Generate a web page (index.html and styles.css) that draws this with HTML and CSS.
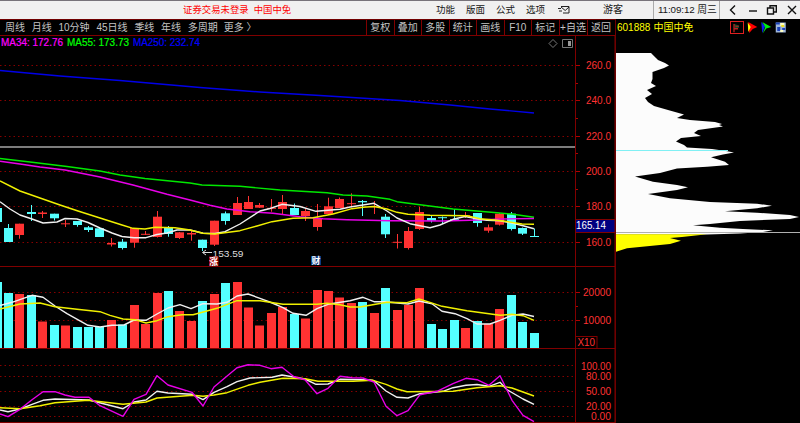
FILE: index.html
```html
<!DOCTYPE html>
<html lang="zh-CN">
<head>
<meta charset="utf-8">
<title>601888 中国中免</title>
<link rel="stylesheet" href="styles.css">
</head>
<body>
<div class="app">
  <header class="titlebar">
    <div class="title"><span>证券交易未登录</span><span>中国中免</span></div>
    <nav class="menu">
      <span>功能</span><span>版面</span><span>公式</span><span>选项</span>
    </nav>
    <svg class="mail" viewBox="0 0 13 10"><path d="M3 1.5h8v6.500H5M3 2l4.200 3.500L11 2M0 3.500h3M1 6h3" /></svg>
    <div class="guest">游客</div>
    <div class="clock">11:09:12 周三</div>
    <div class="controls">
      <svg viewBox="0 0 12 12"><path d="M8 1.5L3.500 6 8 10.500"/></svg>
      <svg viewBox="0 0 12 12"><path d="M2 7h8"/></svg>
      <svg viewBox="0 0 12 12"><path d="M1.500 4h6v6h-6zM4 4V1.700h6.300V8H8"/></svg>
      <svg viewBox="0 0 12 12"><path d="M2 2l8 8M10 2l-8 8"/></svg>
    </div>
  </header>

  <main class="body">
    <section class="left">
      <div class="toolbar">
        <div class="periods">
          <span>周线</span><span>月线</span><span class="wide">10分钟</span><span class="wide">45日线</span><span>季线</span><span>年线</span><span class="three">多周期</span><span>更多 〉</span>
        </div>
        <div class="tools">
          <span>复权</span><span>叠加</span><span>多股</span><span>统计</span><span>画线</span><span>F10</span><span>标记</span><span>+自选</span><span>返回</span>
        </div>
      </div>

      <svg class="panel price" viewBox="0 36 615 231">
        <path class="grid" d="M0 65.500H575M0 100.500H575M0 136.500H575M0 171.500H575M0 206.500H575M0 242.500H575"/>
        <path class="level" d="M0 147H575"/>
        <g class="frame">
          <path d="M575.500 36V266M615 36V266M0 266.500H615"/>
          <path class="tick" d="M576 65.500h4M576 100.500h4M576 136.500h4M576 171.500h4M576 206.500h4M576 242.500h4M576 83.500h2M576 118.500h2M576 153.500h2M576 189.500h2"/>
        </g>
        <g id="candles"></g>
        <g class="lines">
          <polyline class="blue" points="0,70.500 60,76 120,80.500 200,87.500 260,92 320,95.500 400,100.500 450,105 490,109 534,113"/>
          <polyline class="green" points="0,158.500 30,162 67,166.500 100,171 120,175 145,178.500 190,183 202,185 240,186.300 280,190 327,192.700 343,195 367,196 390,199.300 397,201.700 420,204.700 453,209 497,212.700 513,214.300 534,217.300"/>
          <polyline class="magenta" points="0,161.300 20,164 40,167 65,170 85,174 100,177 133,185 167,194.300 190,200 210,205.300 227,209 250,211.700 273,213.300 300,216.700 323,218.700 347,219.700 390,220.700 443,221 470,220.300 503,219 534,218.500"/>
          <polyline class="white" points="0,201.700 10,209 20,215 32,219 43,223 57,222 65,218.500 77,219 88,222.500 100,228 112,233 122,236.500 134,237.700 146,237.700 157,234.500 167,233 177,230 190,230 203,233.300 215,233.500 225,231.700 240,224 260,211 270,208.500 282,204.300 300,206.500 316,211.300 340,209.300 350,207 374,203.300 387,211 397,218 410,223.700 430,227.700 440,225 453,219.300 465,216.500 477,218.700 487,220.300 500,220.700 513,223.300 523,225.700 534,228.700"/>
          <polyline class="yellow" points="0,181 20,191 40,198 60,205 78,211 100,218 122,225 133,228.300 145,229 155,227.300 175,227.700 190,230 203,233.300 215,234 240,230.700 257,226 272,221.700 293,218.300 313,217.700 333,214 352,208.700 363,207.300 374,206.500 387,209 397,212.300 408,214.300 430,215.300 467,215.700 480,218.700 497,220.300 507,221.500 522,224 534,224.300"/>
        </g>
        <g class="legend">
          <text class="m" x="1" y="46" textLength="62" lengthAdjust="spacingAndGlyphs">MA34: 172.76</text>
          <text class="g" x="67" y="46" textLength="62" lengthAdjust="spacingAndGlyphs">MA55: 173.73</text>
          <text class="b" x="133" y="46" textLength="67" lengthAdjust="spacingAndGlyphs">MA250: 232.74</text>
        </g>
        <path class="glyph" d="M553 39.500l4 4-4 4-4-4zM562.500 39.500h10v8h-10z"/>
        <path class="glyph-fill" d="M568 41h3v5h-3z"/>
        <g class="axis">
          <text x="586" y="69" textLength="25" lengthAdjust="spacingAndGlyphs">260.0</text>
          <text x="586" y="104" textLength="25" lengthAdjust="spacingAndGlyphs">240.0</text>
          <text x="586" y="140" textLength="25" lengthAdjust="spacingAndGlyphs">220.0</text>
          <text x="586" y="175" textLength="25" lengthAdjust="spacingAndGlyphs">200.0</text>
          <text x="586" y="210" textLength="25" lengthAdjust="spacingAndGlyphs">180.0</text>
          <text x="586" y="246" textLength="25" lengthAdjust="spacingAndGlyphs">160.0</text>
        </g>
        <rect class="last" x="575.500" y="219.500" width="39.500" height="13"/>
        <text class="last-text" x="576" y="229" textLength="30" lengthAdjust="spacingAndGlyphs">165.14</text>
        <path class="arrow" d="M212 252.500h-9M206 250l-3.500 2.500 3.500 2.500"/>
        <text class="low" x="212.500" y="256.500" textLength="31" lengthAdjust="spacingAndGlyphs">153.59</text>
        <rect class="tag-red" x="209" y="256.500" width="9.500" height="9"/>
        <text class="tag" x="209.300" y="264.600">涨</text>
        <rect class="tag-blue" x="311" y="256" width="10" height="9"/>
        <text class="tag" x="311.500" y="264.300">财</text>
      </svg>

      <svg class="panel volume" viewBox="0 267 615 82">
        <path class="grid" d="M0 292.500H575M0 320.500H575"/>
        <g class="frame">
          <path d="M575.500 267V349M615 267V349M0 348.500H615"/>
          <path class="tick" d="M576 292.500h4M576 320.500h4M576 306.500h2"/>
        </g>
        <g id="bars"></g>
        <g class="lines">
          <polyline class="white" points="0,305.500 12,302.300 32,295.300 43,297.300 55,306 67,313.700 88,325.300 100,327 112,325.300 124,325 134,320 146,320.300 157,314 168,308 180,304.700 191,308.700 203,303.700 217,304 227,302.300 237,296 248,294 260,298.300 271,302.500 283,307.700 293,313.300 306,315.300 317,308.700 328,304.300 350,300.700 363,297.300 374,301.700 385,301.700 408,304 419,301 432,303.700 442,311.300 455,313.700 467,318.700 477,324 490,324 500,320.300 512,315.300 523,314 534,316.500"/>
          <polyline class="yellow" points="0,309 20,304 40,303 55,306.700 77,309.300 100,311.700 110,315.300 123,319 135,319.700 146,323 157,320.700 168,316.700 182,314.700 193,314.700 217,308.300 237,300.700 260,300.700 283,304.300 317,304.300 327,303.300 340,304.700 350,307 360,307 387,302.300 407,302.700 419,299 430,302.300 442,306.300 467,310.700 500,315.300 512,314.300 523,315.700 534,320.300"/>
        </g>
        <g class="axis">
          <text x="583" y="296" textLength="28" lengthAdjust="spacingAndGlyphs">20000</text>
          <text x="583" y="324" textLength="28" lengthAdjust="spacingAndGlyphs">10000</text>
          <rect class="unit" x="575.500" y="336.500" width="21.500" height="12"/>
          <text x="577.500" y="346" textLength="17.500" lengthAdjust="spacingAndGlyphs">X10</text>
        </g>
      </svg>

      <svg class="panel indicator" viewBox="0 349 615 74">
        <path class="grid" d="M0 365.500H575M0 376.500H575M0 391.500H575M0 406.500H575M0 416.500H575"/>
        <g class="frame">
          <path d="M575.500 349V422M615 349V422M0 422.500H615"/>
        </g>
        <g class="lines">
          <polyline class="white" points="0,410 8,411.700 20,409 32,404.300 43,400.300 55,399 89,400 123,408.700 134,402 146,400 157,391.300 168,393 192,394.300 203,399.700 214,392.300 227,386.700 237,381.700 250,378 272,377.300 282,375 305,379 316,384.300 328,384 340,379.300 370,380 374,380.700 386,391 397,397.300 408,398 420,393.700 443,391.300 453,387.700 466,385.300 477,384.500 489,386.300 500,382.300 507,389.700 523,399 534,404.300"/>
          <polyline class="yellow" points="0,407.700 20,408.700 40,405.700 55,402.700 88,400.300 123,404.300 146,402 157,398 193,395.300 203,396.300 214,395 227,392.700 248,385.300 260,382.300 283,378.300 305,378.700 318,381.300 353,381.300 373,380.300 386,384.300 397,389 407,391.700 453,391.300 477,387.700 500,385.700 512,388 534,396"/>
          <polyline class="magenta" points="0,414 8,416.700 20,409.300 32,399.700 43,391.700 55,391.700 65,395 75,397.300 89,397.300 100,405.700 123,416.300 134,399.300 146,394.300 157,375.700 168,385 192,392.300 203,406 214,387 237,367.700 248,364.700 260,365.300 271,368.700 282,367.300 294,376.700 305,379.700 317,393.700 328,388.300 340,376.300 352,377.700 363,378 374,382 386,406.300 397,415.700 408,410.700 420,394.700 437,391.300 453,383.700 466,378.300 477,379.700 489,385.300 500,375.700 512,400.300 523,415.300 534,421.700"/>
        </g>
        <g class="axis">
          <text x="581" y="370" textLength="30" lengthAdjust="spacingAndGlyphs">100.00</text>
          <text x="586" y="380" textLength="25" lengthAdjust="spacingAndGlyphs">80.00</text>
          <text x="586" y="395" textLength="25" lengthAdjust="spacingAndGlyphs">50.00</text>
          <text x="586" y="410" textLength="25" lengthAdjust="spacingAndGlyphs">20.00</text>
          <text x="591" y="420" textLength="20" lengthAdjust="spacingAndGlyphs">0.00</text>
        </g>
      </svg>
    </section>

    <aside class="right">
      <div class="stock">
        <span class="code">601888</span><span class="name">中国中免</span>
        <div class="flags">
          <svg class="active" viewBox="0 0 13 13"><path fill="#164a28" d="M3 2l6 2v3H4z"/><path fill="#c02020" d="M2.500 2.500h1.500V12H2.500zM5 4.500h4v1H5zM4 7h4v2H4z"/></svg>
          <svg viewBox="0 0 13 13"><path fill="#f00" d="M3 1l9 5-4.500 2L4 12z"/><path fill="#ff0" d="M2.500 1.500l3 4.500-2.500 5z"/></svg>
          <svg viewBox="0 0 13 13"><path fill="#0c1ef0" d="M2 1l4 4-3 7z"/><path fill="#0e1" d="M3 1l9 5-5 1.500-3.500 5L6 6z"/></svg>
          <svg viewBox="0 0 13 13"><path fill="#9fb6dc" d="M1.500 1.500h10v10h-10z"/><path fill="#1940b8" d="M1.500 1.500h4v2h-4zM3 6h3v4H3zM8 7h3v2H8z"/><path fill="#ffffc0" d="M6 2h4v3H6zM6 9h3v2H6z"/><path fill="#eee020" d="M7 4h3v2H7z"/></svg>
        </div>
      </div>
      <svg class="profile" viewBox="615 36 185 387">
        <path class="white-area" d="M616 53H651L656 58 658 60 665 63 669 65.500 664 68 652.500 72 652.500 79 651 83 656 86 647 90 652 94 645 98 648 102 654 106 668 110 684 114.500 677 118 690 120 715 122 722 124 719 125 723 126.500 698 130 694 133 701 136 681 138 676 141.500 684 145 687 147.500 712 149 726 151 734 152.500 723 154.500 711 157.300 725 161.700 729 165 707 166.700 677 168.500 660 173 635 176.500 653 181.700 677 185 688 187.300 677 190 648 194 670 198.300 710 202 757 203.700 772 205.700 757 208.300 725 211.300 757 212.700 790 215 799 217 790 219 740 221 710 224 693 225.300 720 227.700 743 229 773 230.300 763 232 740 233.500 707 234.500H616z"/>
        <path class="yellow-area" d="M616 234.200H707L682 237 670 238 681 240.700 670 244 627 248.300 616 251.700z"/>
        <path class="cyan-line" d="M616 150.500H728"/>
        <path class="gray-line" d="M616 232.500H800"/>
      </svg>
    </aside>
  </main>
</div>
<script src="chart.js"></script>
</body>
</html>
```
FILE: styles.css
```css
* { box-sizing: border-box; }
body {
  margin: 0;
  background: #000;
  font-family: "Liberation Sans", "Noto Sans CJK SC", sans-serif;
  font-size: 10px;
}
.app { width: 800px; height: 423px; overflow: hidden; display: flex; flex-direction: column; }

.titlebar {
  height: 19px;
  flex: none;
  display: flex;
  align-items: center;
  background: #f0f0f0;
  border-top: 1px solid #77737a;
  color: #151515;
  line-height: 18px;
  white-space: nowrap;
}
.title { display: flex; gap: 5px; padding-left: 183px; width: 436px; color: #f00; font-size: 9.4px; }
.menu { display: flex; width: 122px; }
.menu span { width: 30px; font-size: 9.5px; }
.mail { width: 13px; height: 10px; fill: none; stroke: #222; stroke-width: 1; }
.guest { width: 83px; padding-left: 32px; height: 18px; border-right: 1px solid #aaa; }
.clock { width: 66px; padding-left: 4px; height: 18px; border-right: 1px solid #aaa; font-size: 9.8px; letter-spacing: -0.1px; }
.controls { display: flex; gap: 7.5px; padding-left: 7px; }
.controls svg { width: 12px; height: 12px; fill: none; stroke: #111; stroke-width: 1.4; }

.body { display: flex; flex: 1; }
.left { width: 615px; display: flex; flex-direction: column; }
.toolbar {
  height: 17px;
  display: flex;
  justify-content: space-between;
  border-top: 1px solid #700000;
  border-bottom: 1px solid #800000;
  color: #c4c4c4;
  line-height: 15px;
  white-space: nowrap;
}
.periods { display: flex; padding-left: 5px; }
.periods span { width: 26.7px; }
.periods .wide { width: 38px; }
.periods .three { width: 36px; }
.tools { display: grid; grid-template-columns: repeat(7, 27.5px) 28px 28px; width: 249px; }
.tools span { border-left: 1px solid #800000; text-align: center; }

.panel { display: block; width: 615px; }
.price { height: 231px; }
.volume { height: 82px; }
.indicator { height: 74px; }

.grid { fill: none; stroke: #870000; stroke-width: 1; stroke-dasharray: 1.5 3; }
.frame path { fill: none; stroke: #800000; stroke-width: 1; }
.frame .tick { stroke: #b00000; }
.level { stroke: #a6a6a6; stroke-width: 1.6; }
.lines polyline { fill: none; stroke-width: 1.4; stroke-linejoin: round; }
.lines .blue { stroke: #0000e8; }
.lines .green { stroke: #00e800; }
.lines .magenta { stroke: #e800e8; }
.lines .white { stroke: #f0f0f0; }
.lines .yellow { stroke: #f0f000; }

.up { fill: #ff3232; }
.down { fill: #54ffff; }

.legend text { font-size: 10px; stroke-width: 0.2; }
.legend .m { fill: #f0f; stroke: #f0f; }
.legend .g { fill: #0f0; stroke: #0f0; }
.legend .b { fill: #00f; stroke: #00f; }
.axis text { font-size: 10.8px; fill: #ff3232; }
.unit { fill: #000; stroke: #800000; }
.glyph { fill: none; stroke: #777; stroke-width: 1; }
.glyph-fill { fill: #999; }
.last { fill: #000080; stroke: #800000; }
.last-text { font-size: 10.5px; fill: #fff; }
.arrow { fill: none; stroke: #ddd; stroke-width: 1; }
.low { font-size: 9.8px; fill: #ddd; }
.tag { font-size: 8.8px; font-weight: bold; fill: #fff; }
.tag-red { fill: #a00000; }
.tag-blue { fill: #0a3c82; }

.right { width: 185px; display: flex; flex-direction: column; border-left: 1px solid #700000; }
.stock { height: 17px; display: flex; align-items: center; padding-left: 1px; color: #ff0; white-space: nowrap; line-height: 15px; }
.code { width: 36.5px; font-size: 10px; }
.name { width: 76.5px; }
.flags { display: flex; gap: 1px; }
.flags svg { width: 13.5px; height: 13px; }
.flags .active { border: 1px solid #e02020; }
.profile { display: block; width: 185px; height: 387px; margin-left: -1px; }
.white-area { fill: #fcfcfc; }
.yellow-area { fill: #ff0; }
.cyan-line { stroke: #80f0f4; }
.gray-line { stroke: #b0b0b0; }
```
FILE: chart.js
```js
const PITCH = 11.43;
const FIRST = 8.6;
const NS = "http://www.w3.org/2000/svg";

// direction, body top, body bottom, high, low
const candles = [
  ["d",208,222,208,222],["d",228,242,224,242],["u",223.7,235,223.7,238.7],["d",212,214,205,221],
  ["u",212.5,214,211,218],["d",213.7,218.3,213.7,220.5],["u",223.3,224.3,220,227],["d",221,225,221,226.7],
  ["d",227.3,230,226,232],["d",228.3,237,228,237],["u",243,244.5,238,246.5],["d",241.7,248,239,249.5],
  ["u",228,242.7,228,247.7],["u",233.8,234.8,231,235],["u",216.7,237,211,237.5],["d",227,234,226,236.7],
  ["u",232.3,238,232,239],["u",233,234.5,231,240.7],["d",239.7,248,239.7,251],["u",220.7,244.7,220.7,246],
  ["d",213.3,221,211.5,224.7],["u",203,215,197,215],["u",202,209,196,209],["u",205,207.7,203,208],
  ["u",207.8,208.8,199,211.7],["u",202,209,195,214.3],["d",208,215,203.5,215],["u",211,216,209,221],
  ["u",218.3,227,204,230.7],["u",206.3,214,197.7,215],["u",199,208,197.5,208],["u",203.2,204.2,193.3,207.3],
  ["d",201,202.3,200,216],["u",206.2,207.2,201,214],["d",216.7,234.3,214,238],["u",241.8,242.8,234,248.5],
  ["u",231,248,227,249.5],["u",212,229,207,230],["d",218,220.7,216,222.5],["d",217.2,218.2,216.5,224],
  ["d",219,219.8,209,220.7],["u",215.2,216.2,212,218],["d",213,223,213,226.7],["u",227.3,230.7,224.5,232.7],
  ["u",213.7,224.7,213,225.5],["d",213.7,229,212,230.5],["d",228,233.7,227.5,235],["d",236,237,228.5,237]
];

const volumeTops = [
  282,293,294,295,321.5,325,325.5,327,327,327,320,324.5,305,324,293,291,311,321,301,294,283,282,
  307.5,325.5,313,307,314,318.5,290,291,297.5,303,302,313,288,310,305,288,324,329,320,328,321,324,
  309,295,322,333
];

function rect(parent, dir, x, y, width, height) {
  const node = document.createElementNS(NS, "rect");
  node.setAttribute("class", dir === "u" ? "up" : "down");
  node.setAttribute("x", x);
  node.setAttribute("y", y);
  node.setAttribute("width", width);
  node.setAttribute("height", height);
  parent.appendChild(node);
}

const candleGroup = document.getElementById("candles");
const barGroup = document.getElementById("bars");

candles.forEach(([dir, top, bottom, high, low], n) => {
  const left = Math.round(FIRST + PITCH * (n - 1) - 4.6);
  rect(candleGroup, dir, left + 4, high, 1, low - high);
  rect(candleGroup, dir, left, top, 9, bottom - top);
  rect(barGroup, dir, left, volumeTops[n], 9, 348 - volumeTops[n]);
});
```
